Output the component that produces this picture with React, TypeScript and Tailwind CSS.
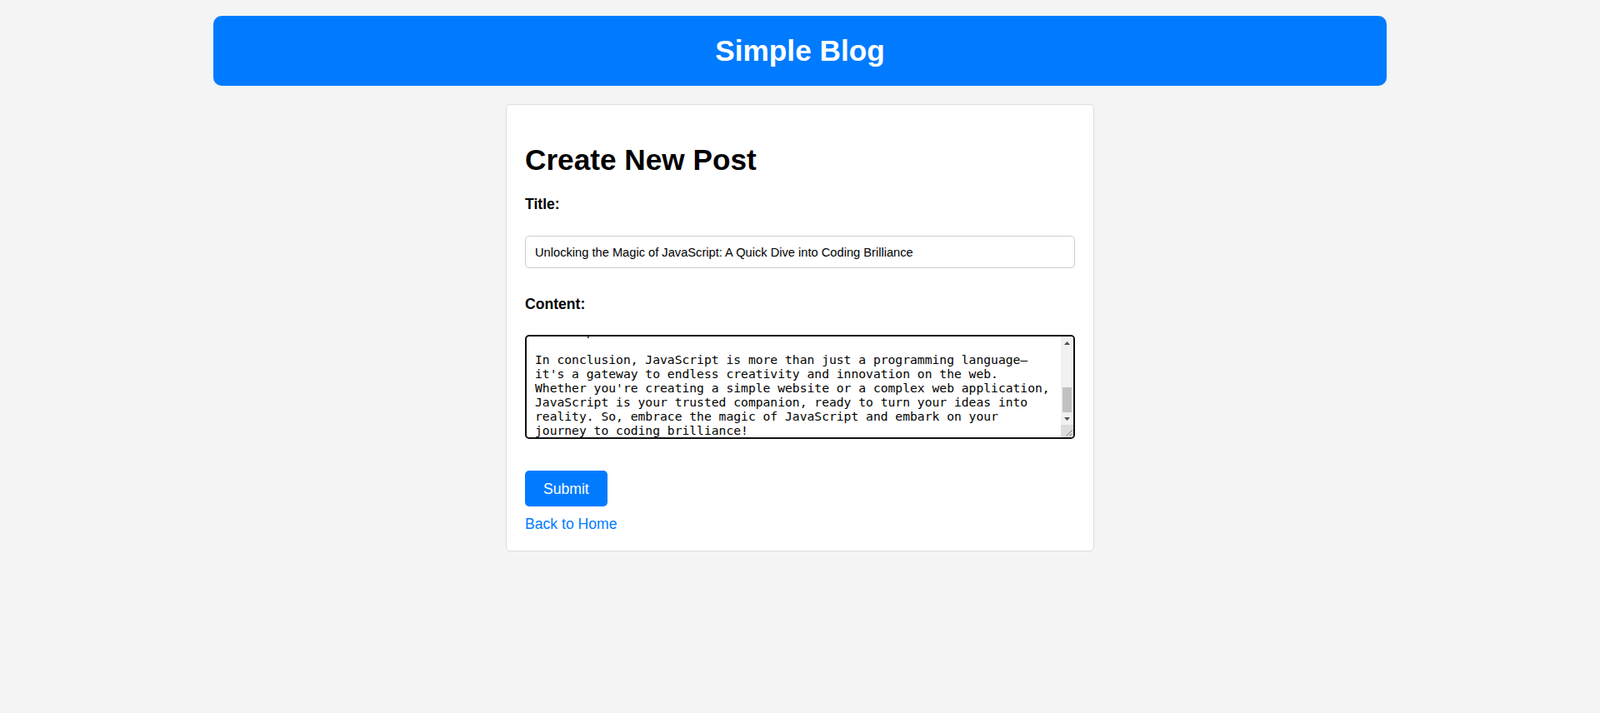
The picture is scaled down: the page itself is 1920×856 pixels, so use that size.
import React, {useEffect, useRef} from "react";

const postTitle = "Unlocking the Magic of JavaScript: A Quick Dive into Coding Brilliance"

const postBody = [
    "JavaScript is the language that brings the web to life. From simple button clicks to complex single page applications, it powers the interactive experiences we use every day.",
    "",
    "One of the most exciting things about JavaScript is its versatility. You can manipulate the DOM, handle events, fetch data from APIs, and create smooth animations, all with just a few lines of code.",
    "",
    "Modern JavaScript (ES6 and beyond) introduced powerful features such as arrow functions, template literals, destructuring, promises, and async await, making code cleaner and easier to read.",
    "",
    "With frameworks like React, Vue, and Angular, plus Node.js on the server, you can build powerful and modern applications from scratch like a pro.",
    "",
    "In conclusion, JavaScript is more than just a programming language\u2014it's a gateway to endless creativity and innovation on the web. Whether you're creating a simple website or a complex web application, JavaScript is your trusted companion, ready to turn your ideas into reality. So, embrace the magic of JavaScript and embark on your journey to coding brilliance!",
].join("\n")

// classic chrome-looking scrollbar, drawn over the textarea's right padding
const FakeScrollbar = () => (
    <div className="absolute top-[2px] right-[2px] bottom-[2px] flex w-[15px] flex-col overflow-hidden rounded-r-[3px]">
        <div className="flex h-[15px] items-center justify-center bg-[#f1f1f1]">
            <svg width="7" height="4" viewBox="0 0 7 4">
                <path d="M3.5 0 L7 4 L0 4 Z" fill="#505050"/>
            </svg>
        </div>
        <div className="flex flex-1 flex-col justify-end bg-[#f1f1f1] px-[2px]">
            <div className="h-[30px] bg-[#c1c1c1]"/>
        </div>
        <div className="flex h-[15px] items-center justify-center bg-[#f1f1f1]">
            <svg width="7" height="4" viewBox="0 0 7 4">
                <path d="M0 0 L7 0 L3.5 4 Z" fill="#505050"/>
            </svg>
        </div>
        <div className="relative h-[15px] bg-[#dcdcdc]">
            <svg width="15" height="15" viewBox="0 0 15 15" className="absolute inset-0">
                <path d="M13.5 6.5 L6.5 13.5 M13.5 10.5 L10.5 13.5" stroke="#777" strokeWidth="1"/>
            </svg>
        </div>
    </div>
)

const CreatePost = () => {
    const contentRef = useRef<HTMLTextAreaElement>(null)

    useEffect(() => {
        const el = contentRef.current
        if (!el) return
        el.focus({preventScroll: true})
        el.setSelectionRange(el.value.length, el.value.length)
        // caret scrolled into view, bottom padding left out
        el.scrollTop = el.scrollHeight - el.clientHeight - 10
    }, []);

    return (
        <div className="mx-auto mt-[22px] w-[706px] rounded-[5px] border border-[#ddd] bg-white px-[22px] pt-[46px] pb-[22px]">
            <h2 className="text-[35.2px] leading-[40px] font-bold text-black">Create New Post</h2>

            <form onSubmit={e => e.preventDefault()}>
                <label htmlFor="title" className="mt-[23px] block text-[17.6px] leading-[20px] font-bold text-black">
                    Title:
                </label>
                <input
                    id="title"
                    type="text"
                    defaultValue={postTitle}
                    className="mt-[28px] block h-[39px] w-full rounded-[5px] border border-[#ccc] bg-white px-[11px] text-[14.67px] text-black outline-none"
                />

                <label htmlFor="content" className="mt-[33px] block text-[17.6px] leading-[20px] font-bold text-black">
                    Content:
                </label>
                <div className="relative mt-[27px] h-[125px]">
                    <textarea
                        id="content"
                        ref={contentRef}
                        defaultValue={postBody}
                        className="block h-full w-full resize-none overflow-hidden rounded-[5px] border-2 border-[#101010] bg-white py-[10px] pr-[25px] pl-[10px] font-['DejaVu_Sans_Mono',monospace] text-[14.67px] leading-[17px] text-black caret-black outline-none"
                    />
                    <FakeScrollbar/>
                </div>

                <button
                    type="submit"
                    className="mt-[38px] block h-[43px] rounded-[5px] bg-[#007bff] px-[22px] text-[17.6px] leading-[20px] text-white"
                >
                    Submit
                </button>
            </form>

            <a href="#" className="mt-[11px] block w-fit text-[17.6px] leading-[20px] text-[#007bff]">
                Back to Home
            </a>
        </div>
    )
}

export default function App() {
    return (
        <div className="min-h-screen bg-[#f4f4f4] pt-[19px] font-['Liberation_Sans',Arial,sans-serif]">
            <header className="mx-auto w-[1408px] rounded-[10px] bg-[#007bff] py-[22px] text-center">
                <h1 className="text-[35.2px] leading-[40px] font-bold text-white">Simple Blog</h1>
            </header>

            <CreatePost/>
        </div>
    )
}
